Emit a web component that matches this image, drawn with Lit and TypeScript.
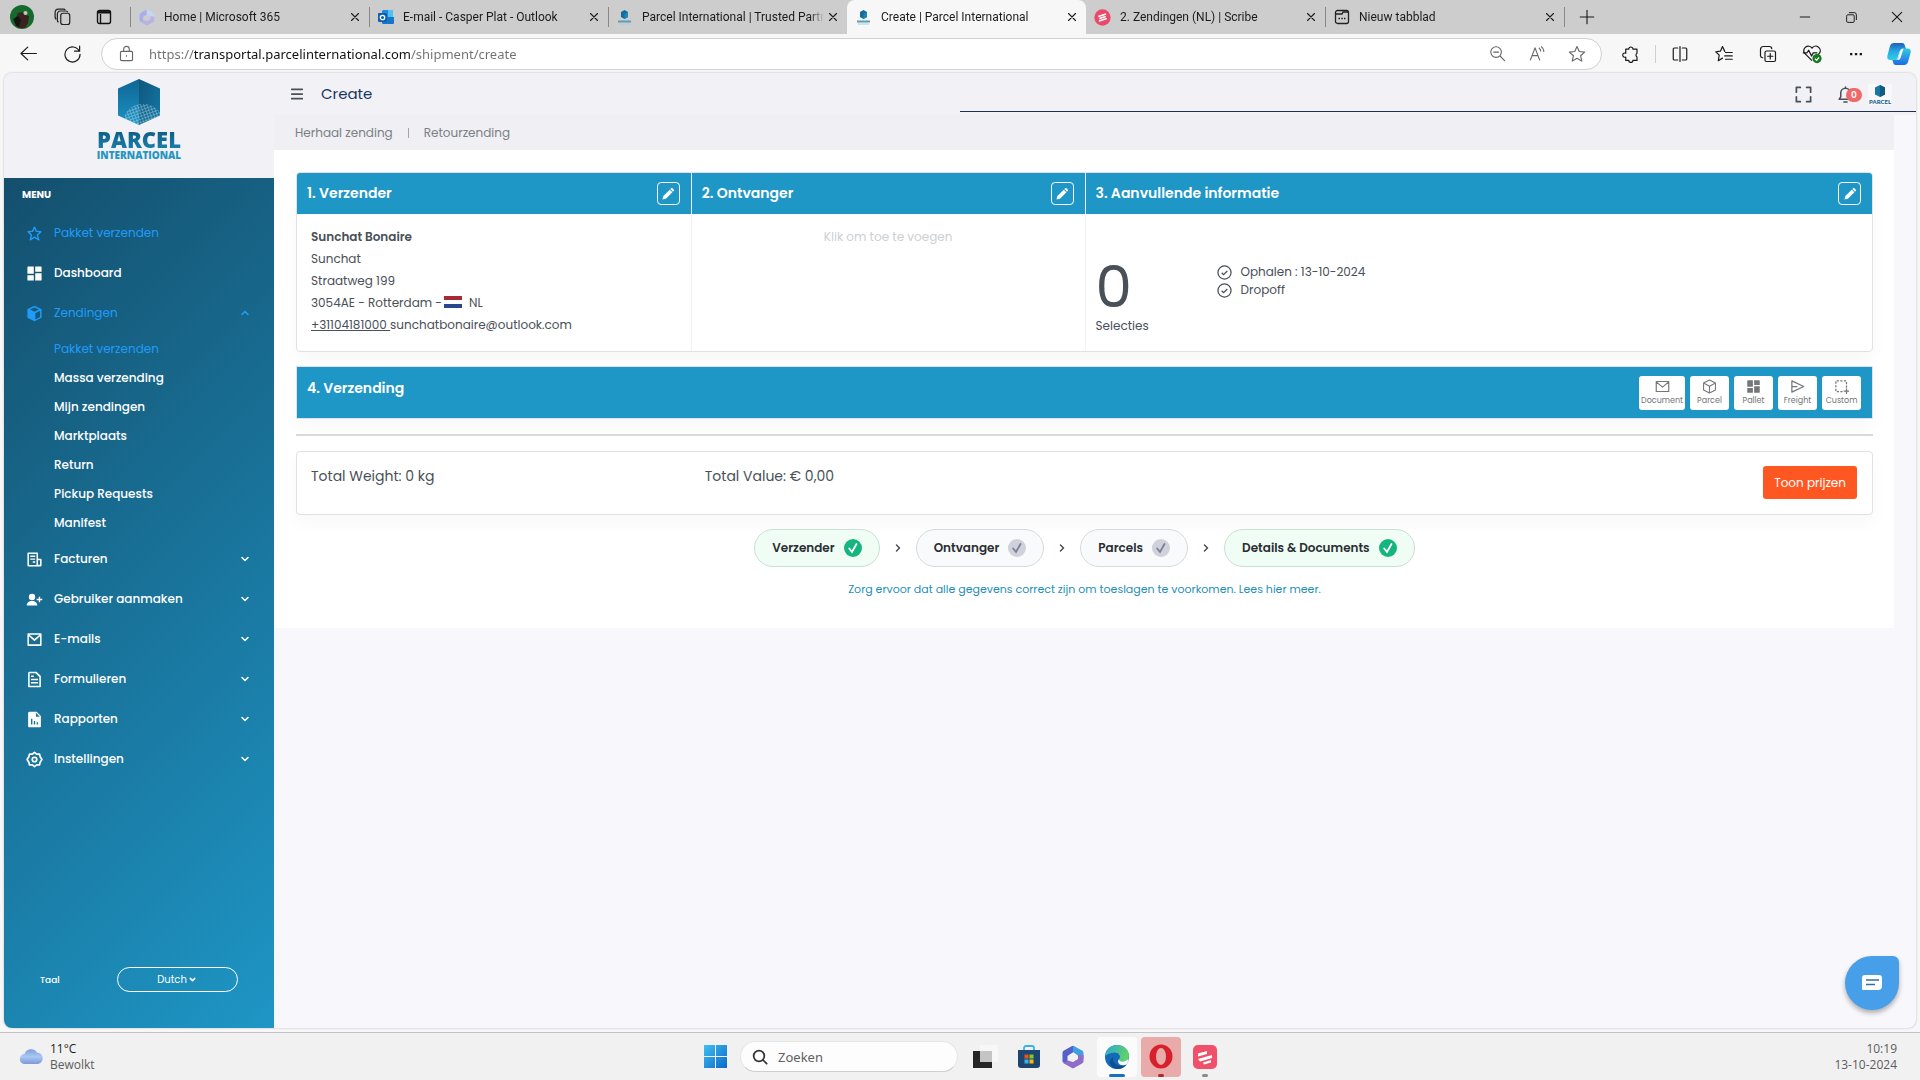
import { LitElement, html, css, svg, nothing } from "lit";
import { customElement } from "lit/decorators.js";

const line = (d: string, size = 20, width = 1.6) => html`<svg class="ico" width=${size} height=${size} viewBox="0 0 24 24" fill="none" stroke="currentColor" stroke-width=${width} stroke-linecap="round" stroke-linejoin="round" aria-hidden="true"><path d=${d}></path></svg>`;
const solid = (d: string, size = 18) => html`<svg class="ico" width=${size} height=${size} viewBox="0 0 24 24" fill="currentColor" fill-rule="evenodd" aria-hidden="true"><path d=${d}></path></svg>`;

const D = {
  star: "m6.516 14.323-1.49 6.452a.998.998 0 0 0 1.529 1.057L12 18.202l5.445 3.63a1.001 1.001 0 0 0 1.517-1.106l-1.829-6.4 4.536-4.082a1 1 0 0 0-.59-1.74l-5.701-.454-2.467-5.461a.998.998 0 0 0-1.822 0L8.622 8.05l-5.701.453a1 1 0 0 0-.619 1.713l4.214 4.107zm2.853-4.326a.998.998 0 0 0 .832-.586L12 5.43l1.799 3.981a.998.998 0 0 0 .832.586l3.972.315-3.271 2.944c-.284.256-.397.65-.293 1.018l1.253 4.385-3.736-2.491a.995.995 0 0 0-1.109 0l-3.904 2.603 1.05-4.546a1 1 0 0 0-.276-.94l-3.038-2.962 4.09-.326z",
  dashboard: "M2 12.5V3a1 1 0 0 1 1-1h8v10.500zM13 2h8a1 1 0 0 1 1 1v6.500h-9zM2 14.500h9V22H3a1 1 0 0 1-1-1zM13 11.500h9V21a1 1 0 0 1-1 1h-8z",
  cube: "M12 1 22 6v12l-10 5L2 18V6zM12 3.400 5.800 6.500 12 9.600l6.200-3.100zM13.200 11.500v8.800l6.700-3.400V8.200z",
  invoice: "M3 2h13a1 1 0 0 1 1 1v8h4a1 1 0 0 1 1 1v8a2 2 0 0 1-2 2H4a2 2 0 0 1-2-2V3a1 1 0 0 1 1-1zM4.200 4.200v15.600h10.600V4.200zM17 13v6.500h2.800V13zM6 6.500h7v2H6zM6 10.500h7v2H6zM9.500 14.500H13v2H9.500z",
  userPlus: "M8.500 4a4.500 4.500 0 1 1 0 9 4.500 4.500 0 0 1 0-9zM1 20.500c0-4 3-6.500 7.500-6.500s7.500 2.500 7.500 6.500zM18 8h2v3h3v2h-3v3h-2v-3h-3v-2h3z",
  mail: "M3 3h18a1 1 0 0 1 1 1v16a1 1 0 0 1-1 1H3a1 1 0 0 1-1-1V4a1 1 0 0 1 1-1zM4.200 7.500v11.300h15.600V7.500L12 14.300zM5 5.200l7 6 7-6z",
  file: "M5 1h10l6 6v15a1 1 0 0 1-1 1H4a1 1 0 0 1-1-1V3a2 2 0 0 1 2-2zM5.200 3.200v17.600h13.600V8.500L13.500 3.200zM7 6.500h4v2H7zM7 11h10v2H7zM7 15.500h10v2H7z",
  report: "M5 1h10l6 6v15a1 1 0 0 1-1 1H4a1 1 0 0 1-1-1V3a2 2 0 0 1 2-2zM7 11v8h2v-8zM11 14v5h2v-5zM15 16v3h2v-3zM14 2.500V8h5.500z",
  cog: "M12 2 15 4.500 19 4.300 20 8.200 22.500 12 20 15.800 19 19.700 15 19.500 12 22 9 19.500 5 19.700 4 15.800 1.500 12 4 8.200 5 4.300 9 4.500ZM12 8.800a3.200 3.200 0 1 0 0 6.400 3.200 3.200 0 0 0 0-6.400Z",
  down: "m6 9 6 6 6-6",
  up: "m6 15 6-6 6 6",
  right: "m9 6 6 6-6 6",
  close: "M5 5l14 14M19 5 5 19",
  plus: "M12 3v18M3 12h18",
  pencil: "M2.500 21.500l1.500-6L15 4.500l4.500 4.500L8.500 20zM16 3.500l1.200-1.200a1.800 1.800 0 0 1 2.600 0l1.900 1.900a1.800 1.800 0 0 1 0 2.600L20.500 8z",
};

const smallLogo = html`<svg class="ico" width="15" height="16" viewBox="0 0 15 16" aria-hidden="true"><path d="M7.500 1 11 3v5l-3.500 2L4 8V3z" fill="#126c9c"></path><path d="M7.500 5 11 3v5l-3.500 2z" fill="#1b86b8"></path><path d="M1 11.500h13v2H1z" fill="#5d9cb8"></path><path d="M2 14.500h11v1H2z" fill="#a5d0e2"></path></svg>`;

const favicons: Record<string, unknown> = {
  m365: html`<svg class="ico" width="16" height="17" viewBox="0 0 22 24" aria-hidden="true"><path d="M10 1 2 5.500C1 6 .5 7 .5 8v9l5 2.500V11l6-4V1z" fill="#a9aee8"></path><path d="M12 1l8 4.500c1 .5 1.500 1.500 1.500 2.500v6l-5-3-6-4V1z" fill="#c3d6f3"></path><path d="M21.500 11v5c0 1-.5 2-1.500 2.500L12 23c-1 .4-1.500.3-2 0L1 18l5-2.500 5 1.500 5-3v-4z" fill="#b6b4e4"></path></svg>`,
  outlook: html`<svg class="ico" width="16" height="16" viewBox="0 0 16 16" aria-hidden="true"><path d="M5 1h9a1 1 0 0 1 1 1v6H4V2z" fill="#1a8be0"></path><path d="M10 1h5v7h-5z" fill="#4cc2f5"></path><path d="M4 8h12v6a1 1 0 0 1-1 1H5a1 1 0 0 1-1-1z" fill="#1577c9"></path><rect x="0" y="4" width="9" height="9" rx="1" fill="#0f5fb0"></rect><circle cx="4.500" cy="8.500" r="2.200" fill="none" stroke="#fff" stroke-width="1.300"></circle></svg>`,
  parcel: smallLogo,
  scribe: html`<svg class="ico" width="17" height="17" viewBox="0 0 24 24" aria-hidden="true"><circle cx="12" cy="12" r="11.500" fill="#ea4a68"></circle><path d="M6 10.500l11-3.500M7.500 13.500l9-3M7 17l11-3.500" stroke="#fff" stroke-width="2.200"></path></svg>`,
  blank: html`<svg class="ico" width="16" height="16" viewBox="0 0 16 16" fill="none" stroke="#222" stroke-width="1.300" aria-hidden="true"><rect x="1.500" y="1.500" width="13" height="13" rx="2"></rect><path d="M2 5h6l1-2h5M4.500 9.500h1.500M7.300 9.500h1.500M10 9.500h1.500"></path></svg>`,
};

const TABS = [
  { icon: "m365", title: "Home | Microsoft 365" },
  { icon: "outlook", title: "E-mail - Casper Plat - Outlook" },
  { icon: "parcel", title: "Parcel International | Trusted Partner" },
  { icon: "parcel", title: "Create | Parcel International", active: true },
  { icon: "scribe", title: "2. Zendingen (NL) | Scribe" },
  { icon: "blank", title: "Nieuw tabblad" },
];

@customElement("browser-chrome")
export class BrowserChrome extends LitElement {
  static styles = css`
    :host { display: block; font-family: Roboto, "Noto Sans", sans-serif; color: #1b1b1b; background: #f7f7f7; }
    button { border: 0; background: none; padding: 0; color: inherit; font: inherit; display: grid; place-items: center; }
    .ico { display: block; flex: none; }
    .strip { display: flex; align-items: stretch; height: 34px; background: #cdcdcd; }
    .lead { display: flex; align-items: center; padding-left: 1px; width: 130px; box-sizing: border-box; }
    .lead button { width: 41px; height: 34px; }
    .tabs { display: flex; flex: 0 1 1434px; min-width: 0; }
    .tab { flex: 1 1 0; min-width: 0; display: flex; align-items: center; padding: 0 5px 0 8px; position: relative; }
    .tab::before { content: ""; width: 1px; height: 20px; background: #8b8782; margin-left: -8px; margin-right: 7px; }
    .tab.active { background: #f7f7f7; border-radius: 8px 8px 0 0; }
    .tab.active::before, .tab.active + .tab::before { background: transparent; }
    .split { width: 1px; height: 20px; align-self: center; background: #8b8782; }
    .fav { width: 17px; display: grid; place-items: center; }
    .title { flex: 1; min-width: 0; margin-left: 9px; font-size: 12px; line-height: 18px; white-space: nowrap; overflow: hidden; mask-image: linear-gradient(to right, #000 calc(100% - 14px), transparent); }
    .close { width: 18px; height: 18px; }
    .new { width: 43px; }
    .win { margin-left: auto; display: flex; }
    .win button { width: 46px; }
    .bar { display: flex; align-items: center; height: 39px; }
    .nav { width: 44px; height: 36px; flex: none; }
    .nav:last-child { width: 42px; }
    .back { margin-left: 6px; }
    .address { flex: 1; min-width: 0; display: flex; align-items: center; height: 30px; margin: 0 7px; padding: 0 4px 0 16px; border: 1px solid #cfd0d2; border-radius: 16px; background: #fff; color: #666; }
    .url { flex: 1; min-width: 0; border: 0; outline: 0; padding: 0; margin-left: 14px; font: 13px/20px "Noto Sans", "Open Sans", sans-serif; color: transparent; background: linear-gradient(to right, #707070 45px, #111 45px, #111 261px, #707070 261px); -webkit-background-clip: text; background-clip: text; }
    .address button { width: 40px; height: 28px; }
    .rule { width: 1px; height: 18px; background: #cfcfcf; margin: 0 2px; }
  `;

  render() {
    return html`
      <div class="strip">
        <div class="lead">
          <button aria-label="Profiel"><svg class="ico" width="24" height="24" viewBox="0 0 24 24"><circle cx="12" cy="12" r="12" fill="#156a2d"></circle><path d="M8 8l4-1 3 3 4 1-1 7-3 5-6 0-4-5 1-5z" fill="#3a2220"></path><path d="M3 14l5-3 3 4-2 7-3-1z" fill="#141512"></path><circle cx="15.500" cy="8" r="2" fill="#cfc4b4"></circle></svg></button>
          <button aria-label="Werkruimten"><svg class="ico" width="18" height="18" viewBox="0 0 24 24" fill="none" stroke="#222" stroke-width="1.600"><rect x="9" y="7" width="12" height="15" rx="3"></rect><path d="M6 19a3 3 0 0 1-1.500-2.500V8a4 4 0 0 1 4-4H16a3 3 0 0 1 2.500 1.500M3 15a3 3 0 0 1-1.500-2.500V5.500A4 4 0 0 1 5.500 1.500H13A3 3 0 0 1 15 2.500"></path></svg></button>
          <button aria-label="Tabbladacties"><svg class="ico" width="16" height="16" viewBox="0 0 16 16" fill="none" stroke="#111" stroke-width="1.400"><rect x="1.500" y="1.500" width="13" height="13" rx="2"></rect><path d="M1.500 3.300h13" stroke-width="2.400"></path><path d="M4.500 5v9.500"></path></svg></button>
        </div>
        <div class="tabs">
          ${TABS.map((t) => html`<div class="tab ${t.active ? "active" : ""}">
            <span class="fav">${favicons[t.icon]}</span>
            <span class="title">${t.title}</span>
            <button class="close" aria-label="Tabblad sluiten">${line(D.close, 12, 2.2)}</button>
          </div>`)}
        </div>
        <span class="split"></span>
        <button class="new" aria-label="Nieuw tabblad">${line(D.plus, 18, 1.5)}</button>
        <div class="win">
          <button aria-label="Minimaliseren">${line("M4 12h16", 14, 2)}</button>
          <button aria-label="Verkleinen">${line("M3 9a2 2 0 0 1 2-2h10a2 2 0 0 1 2 2v10a2 2 0 0 1-2 2H5a2 2 0 0 1-2-2zM8 3h9a4 4 0 0 1 4 4v9", 13, 1.8)}</button>
          <button aria-label="Sluiten">${line("M4 4l16 16M20 4 4 20", 14, 1.9)}</button>
        </div>
      </div>
      <div class="bar">
        <button class="nav back" aria-label="Terug">${line("M22 12H3M11 4l-8.500 8L11 20", 19, 1.5)}</button>
        <button class="nav" aria-label="Vernieuwen">${line("M20.500 9A9.500 9.500 0 1 0 21.500 13M21 2.500V9h-6.500", 19, 1.5)}</button>
        <div class="address">
          ${line("M5 9h14a1.500 1.500 0 0 1 1.500 1.500v10A1.500 1.500 0 0 1 19 22H5a1.500 1.500 0 0 1-1.500-1.500v-10A1.500 1.500 0 0 1 5 9zM8 9V6a4 4 0 0 1 8 0v3M12 15v.8", 17, 1.6)}
          <input class="url" type="text" aria-label="Adres" value="https://transportal.parcelinternational.com/shipment/create">
          <button aria-label="Uitzoomen">${line("M10 2.500a7.500 7.500 0 1 1 0 15 7.500 7.500 0 0 1 0-15zM15.500 15.500l6.500 6.500M6.500 10h7", 17, 1.6)}</button>
          <button aria-label="Hardop voorlezen">${line("M2 21 8.500 4 15 21M4.500 15h8M14.500 4.500a5 5 0 0 1 2 4M17.500 2.500a8 8 0 0 1 3.500 6.500", 17, 1.6)}</button>
          <button aria-label="Favoriet">${line("M12 2l3 6.700 7.200.8-5.400 4.800 1.500 7.200L12 17.800l-6.300 3.700 1.500-7.200L1.800 9.500 9 8.700z", 18, 1.5)}</button>
        </div>
        <button class="nav" aria-label="Extensies">${line("M5 5.500h4a2.800 2.800 0 1 1 5.600 0H20v5.500a3 3 0 0 0 0 5v4.500h-5.400a2.800 2.800 0 0 1-5.600 0H5V16a2.800 2.800 0 1 1 0-5z", 18, 1.6)}</button>
        <span class="rule"></span>
        <button class="nav" aria-label="Scherm splitsen">${line("M9 4H4.500A1.500 1.500 0 0 0 3 5.500v13A1.500 1.500 0 0 0 4.500 20H9M15 4h4.500A1.500 1.500 0 0 1 21 5.500v13a1.500 1.500 0 0 1-1.500 1.500H15M12 2v20", 18, 1.6)}</button>
        <button class="nav" aria-label="Favorieten">${line("M13 8.500 10 2 7.200 8.200 1 9l4.600 4.600L4.400 21 10 17.500M14 10h9M13 14.500h10M14 19h9", 18, 1.6)}</button>
        <button class="nav" aria-label="Verzamelingen">${line("M10 8h10a2 2 0 0 1 2 2v10a2 2 0 0 1-2 2H10a2 2 0 0 1-2-2V10a2 2 0 0 1 2-2zM15 11.500v7M11.500 15h7M5 17a3 3 0 0 1-3-2.500V6a4 4 0 0 1 4-4h8a3 3 0 0 1 3 3", 18, 1.6)}</button>
        <button class="nav" aria-label="Browseressentials"><svg class="ico" width="20" height="20" viewBox="0 0 24 24" fill="none" stroke="#1b1b1b" stroke-width="1.500" stroke-linejoin="round"><path d="M12 20 3 11a5.200 5.200 0 0 1 9-6 5.200 5.200 0 0 1 9 6l-3 3"></path><path d="M1 10.500h5l2-3 3.500 7 2-4h5"></path><circle cx="18" cy="17.500" r="5.500" fill="#167a1f" stroke="none"></circle><path d="M15.500 17.500l2 2 3-3.500" stroke="#fff"></path></svg></button>
        <button class="nav" aria-label="Meer">${solid("M3 10.500h3.500V14H3zM10.300 10.500h3.500V14h-3.500zM17.500 10.500H21V14h-3.500z", 16)}</button>
        <button class="nav" aria-label="Copilot"><svg class="ico" width="24" height="24" viewBox="0 0 24 24"><defs><linearGradient id="cpa" x1="0" y1="0" x2="0" y2="1"><stop offset="0" stop-color="#1b62b8"></stop><stop offset="0.500" stop-color="#29a9e8"></stop><stop offset="1" stop-color="#2fd0e0"></stop></linearGradient><linearGradient id="cpb" x1="0" y1="0" x2="0" y2="1"><stop offset="0" stop-color="#35cbe0"></stop><stop offset="1" stop-color="#1b6be8"></stop></linearGradient></defs><path d="M7 1h8c2 0 2.500 1 3 3l1 3h-3c-2 0-3 1-3.500 3l-2 6c-.5 1.500-1.500 2-3 2H3c-3 0-3-3-2.400-5L3 4C3.700 2 5 1 7 1z" fill="url(#cpa)"></path><path d="M17 23H9c-2 0-2.500-1-3-3l-.7-2H8c2 0 3-1 3.500-3l2-6.500C14 7 15 6.500 16.500 6.500H21c3 0 3 3 2.400 5L21 20c-.7 2-2 3-4 3z" fill="url(#cpb)"></path><path d="M13.500 8.500c.5-1.300 1.500-2 3-2L13.500 16c-.6 1.500-1.500 2-3.500 2 1-.7 1.300-1.500 1.600-3z" fill="#fff"></path></svg></button>
      </div>
    `;
  }
}

const SUB = ["Pakket verzenden", "Massa verzending", "Mijn zendingen", "Marktplaats", "Return", "Pickup Requests", "Manifest"];
const NAV: { label: string; icon: string; on?: boolean; open?: boolean; leaf?: boolean }[] = [
  { label: "Pakket verzenden", icon: "star", on: true, leaf: true },
  { label: "Dashboard", icon: "dashboard", leaf: true },
  { label: "Zendingen", icon: "cube", on: true, open: true },
  { label: "Facturen", icon: "invoice" },
  { label: "Gebruiker aanmaken", icon: "userPlus" },
  { label: "E-mails", icon: "mail" },
  { label: "Formulieren", icon: "file" },
  { label: "Rapporten", icon: "report" },
  { label: "Instellingen", icon: "cog" },
];

@customElement("portal-sidebar")
export class PortalSidebar extends LitElement {
  static styles = css`
    :host { display: flex; flex-direction: column; color: #fff; font: 500 12px/20px Poppins, Inter, sans-serif; }
    .brand { height: 105px; box-sizing: border-box; background: #f1f1f6; display: flex; flex-direction: column; align-items: center; padding-top: 5px; }
    .brand svg { display: block; }
    .name { font: 800 22px/21px "Open Sans", sans-serif; margin-top: 3px; background: linear-gradient(#0d5a80, #1a81ae); -webkit-background-clip: text; background-clip: text; color: transparent; }
    .sub { font: 800 10px/10px "Open Sans", sans-serif; color: #2795bf; }
    .panel { flex: 1; display: flex; flex-direction: column; background: linear-gradient(135deg, #144f6d, #1e96c6); }
    .menu { margin: 0; font-size: 10px; line-height: 33px; font-weight: 700; padding: 0 18px 2px; }
    ul { list-style: none; margin: 0; padding: 0; }
    .item { display: flex; align-items: center; width: 100%; height: 40px; box-sizing: border-box; padding: 0 23px 0 22px; border: 0; background: none; color: inherit; font: inherit; text-decoration: none; text-align: left; }
    .item .text { flex: 1; margin-left: 11px; }
    .item.on, .children a.on { color: #219bf8; font-weight: 400; }
    .ico { display: block; flex: none; }
    .children { padding: 1px 0 2px 50px; }
    .children a { display: block; line-height: 29px; color: #fff; text-decoration: none; }
    .lang { margin-top: auto; display: flex; align-items: center; justify-content: space-between; padding: 0 36px 36px; }
    .lang label { font-size: 9px; }
    .pick { position: relative; width: 121px; }
    .pick select { appearance: none; width: 100%; height: 25px; border: 1px solid #fff; border-radius: 13px; background: transparent; color: #fff; font: 400 10px/14px Poppins, Inter, sans-serif; text-align-last: center; padding: 0 17px 0 6px; }
    .pick svg { position: absolute; left: 71px; top: 8px; pointer-events: none; }
  `;

  render() {
    return html`
      <div class="brand">
        <svg width="44" height="48" viewBox="0 0 44 50" preserveAspectRatio="none" aria-hidden="true">
          <defs>
            <linearGradient id="l" x1="0" y1="0" x2="0" y2="1"><stop offset="0" stop-color="#0f6694"></stop><stop offset="1" stop-color="#1c93c4"></stop></linearGradient>
            <linearGradient id="r" x1="0" y1="0" x2="1" y2="1"><stop offset="0" stop-color="#10567c"></stop><stop offset="1" stop-color="#1479a8"></stop></linearGradient>
            <pattern id="g" width="3" height="3" patternUnits="userSpaceOnUse" patternTransform="rotate(-20)"><path d="M0 0h3M0 0v3" stroke="#d4edf7" stroke-width="1"></path></pattern>
            <clipPath id="c"><path d="M22 1 43 11v28L22 49 1 39V11z"></path></clipPath>
          </defs>
          <path d="M22 1 1 11v28l21 10z" fill="url(#l)"></path>
          <path d="M22 1 43 11v28L22 49z" fill="url(#r)"></path>
          <g clip-path="url(#c)"><ellipse cx="26" cy="44" rx="19" ry="17" fill="url(#g)" opacity="0.700"></ellipse></g>
        </svg>
        <span class="name">PARCEL</span>
        <span class="sub">INTERNATIONAL</span>
      </div>
      <div class="panel">
        <p class="menu">MENU</p>
        <ul>
          ${NAV.map((n) => html`<li>
            ${n.leaf
              ? html`<a class="item ${n.on ? "on" : ""}" href="#">${solid((D as any)[n.icon], 17)}<span class="text">${n.label}</span></a>`
              : html`<button class="item ${n.on ? "on" : ""}" aria-expanded=${n.open ? "true" : "false"}>
                  ${n.icon === "cog" ? line(D.cog, 17, 2.4) : solid((D as any)[n.icon], 17)}
                  <span class="text">${n.label}</span>${line(n.open ? D.up : D.down, 12, 3)}
                </button>`}
            ${n.open ? html`<ul class="children">${SUB.map((s, i) => html`<li><a href="#" class=${i === 0 ? "on" : ""}>${s}</a></li>`)}</ul>` : nothing}
          </li>`)}
        </ul>
        <div class="lang">
          <label for="lang">Taal</label>
          <span class="pick"><select id="lang"><option>Dutch</option></select>${line(D.down, 9, 4)}</span>
        </div>
      </div>
    `;
  }
}

const STEPS = [
  { label: "Verzender", done: true },
  { label: "Ontvanger", done: false },
  { label: "Parcels", done: false },
  { label: "Details & Documents", done: true },
];

const KINDS = [
  { label: "Document", icon: line("M2 4h20v16H2zM2.500 5l9.500 8 9.500-8", 15, 1.9) },
  { label: "Parcel", icon: line("M12 1.500 21.500 6.500v11L12 22.500 2.500 17.500v-11zM2.500 6.500 12 11.500l9.500-5M12 11.500v11", 15, 1.7) },
  { label: "Pallet", icon: solid(D.dashboard, 15) },
  { label: "Freight", icon: line("M3 3l19 9L3 21zM3 12h8", 15, 2) },
  { label: "Custom", icon: html`<svg class="ico" width="15" height="15" viewBox="0 0 24 24" fill="none" stroke="currentColor" stroke-width="2"><path d="M20 14V3H3v17h11" stroke-dasharray="3.500 2.300"></path><path d="M20 15v9M15.500 19.500h9"></path></svg>` },
];

@customElement("shipment-form")
export class ShipmentForm extends LitElement {
  static styles = css`
    :host { display: block; font: 400 12px/22px Poppins, Inter, sans-serif; color: #495057; background: #fff; padding: 22px 21px 28px 22px; }
    button { font: inherit; padding: 0; }
    .ico { display: block; flex: none; }
    .card { border: 1px solid #dfe1e6; border-radius: 4px; background: #fff; box-shadow: 0 8px 18px rgba(18, 38, 63, 0.03); overflow: hidden; }
    .info { display: grid; grid-template-columns: 1fr 1fr 2fr; }
    .col + .col { border-left: 1px solid #f0f1f3; }
    .head { display: flex; align-items: center; justify-content: space-between; height: 41px; padding: 0 11px 0 10px; background: #1e96c6; color: #fff; }
    h2 { margin: 0; font-size: 14px; line-height: 21px; font-weight: 600; }
    .edit { width: 23px; height: 23px; border: 1px solid #fff; border-radius: 4px; background: none; color: #fff; display: grid; place-items: center; }
    .body { min-height: 137px; box-sizing: border-box; padding: 12px 14px; }
    .body strong { display: block; font-weight: 600; }
    .row { display: flex; align-items: center; }
    .flag { width: 18px; height: 12px; margin: 0 7px 3px 2px; }
    .tel { color: inherit; }
    .mail { color: inherit; text-decoration: none; }
    .hint { display: block; width: 100%; border: 0; background: none; color: #cdd0d3; }
    .extra { display: grid; grid-template-columns: 121px 1fr; padding: 45px 10px 8px; }
    .count { font-size: 58px; line-height: 56px; }
    .opts { list-style: none; margin: 0; padding: 4px 0 0; }
    .opts li { display: flex; align-items: center; gap: 9px; line-height: 18px; }
    .ship { margin-top: 14px; border-radius: 0; }
    .ship .head { height: 51px; }
    .ship h2 { margin-bottom: 8px; }
    .kinds { display: flex; gap: 5px; }
    .kind { min-width: 39px; height: 34px; padding: 0 2px; border: 0; border-radius: 3px; background: #fff; color: #74767a; font-size: 8px; line-height: 10px; display: flex; flex-direction: column; align-items: center; justify-content: center; gap: 2px; }
    hr { border: 0; height: 2px; background: #d9dadc; margin: 15px 0; }
    .total { display: grid; grid-template-columns: 1fr 2fr 1fr; padding: 14px 0; font-size: 14px; min-height: 64px; box-sizing: border-box; }
    .total > span { line-height: 20px; padding-left: 14px; }
    .price { justify-self: end; align-self: start; margin-right: 15px; padding: 0 11px; height: 33px; border: 0; border-radius: 3px; background: #ff5722; color: #fff; font-size: 12px; }
    .steps { display: flex; justify-content: center; align-items: center; margin: 14px 0 0; padding: 0; list-style: none; gap: 12px; }
    .steps li { display: flex; align-items: center; gap: 12px; }
    .step { display: flex; align-items: center; gap: 9px; height: 38px; box-sizing: border-box; padding: 0 17px; border: 1px solid #d5d9e3; border-radius: 19px; background: #f9fafb; color: #2a2e33; font-size: 12px; font-weight: 600; }
    .done { background: #effdf5; border-color: #c9e0d6; }
    .note { display: block; text-align: center; margin-top: 11px; font-size: 11px; color: #1e8fb5; text-decoration: none; }
  `;

  private head(title: string) {
    return html`<div class="head"><h2>${title}</h2><button class="edit" aria-label="Bewerken">${solid(D.pencil, 14)}</button></div>`;
  }

  private check() {
    return html`<svg class="ico" width="15" height="15" viewBox="0 0 24 24" fill="none" stroke="currentColor" stroke-width="2" aria-hidden="true"><circle cx="12" cy="12" r="10.500"></circle><path d="M7.500 12.500l3 3 6-6"></path></svg>`;
  }

  render() {
    return html`
      <section class="card info">
        <div class="col">
          ${this.head("1. Verzender")}
          <div class="body">
            <strong>Sunchat Bonaire</strong>
            <div>Sunchat</div>
            <div>Straatweg 199</div>
            <div class="row">3054AE - Rotterdam - <svg class="flag" viewBox="0 0 18 12" role="img" aria-label="Nederland"><path d="M0 0h18v4H0z" fill="#a52a35"></path><path d="M0 4h18v4H0z" fill="#fff"></path><path d="M0 8h18v4H0z" fill="#28478c"></path></svg> NL</div>
            <div><a class="tel" href="tel:+31104181000">+31104181000 </a><a class="mail" href="mailto:sunchatbonaire@outlook.com">sunchatbonaire@outlook.com</a></div>
          </div>
        </div>
        <div class="col">
          ${this.head("2. Ontvanger")}
          <div class="body"><button class="hint">Klik om toe te voegen</button></div>
        </div>
        <div class="col">
          ${this.head("3. Aanvullende informatie")}
          <div class="body extra">
            <div><div class="count">0</div><div>Selecties</div></div>
            <ul class="opts">
              <li>${this.check()}Ophalen : 13-10-2024</li>
              <li>${this.check()}Dropoff</li>
            </ul>
          </div>
        </div>
      </section>
      <section class="card ship">
        <div class="head">
          <h2>4. Verzending</h2>
          <div class="kinds">${KINDS.map((k) => html`<button class="kind">${k.icon}<span>${k.label}</span></button>`)}</div>
        </div>
      </section>
      <hr>
      <section class="card total">
        <span>Total Weight: 0 kg</span>
        <span>Total Value: € 0,00</span>
        <button class="price">Toon prijzen</button>
      </section>
      <ol class="steps">
        ${STEPS.map((s, i) => html`<li>
          ${i ? line(D.right, 12, 3) : nothing}
          <span class="step ${s.done ? "done" : ""}">${s.label}
            <svg class="ico" width="18" height="18" viewBox="0 0 18 18" aria-hidden="true"><circle cx="9" cy="9" r="9" fill=${s.done ? "#16b57f" : "#cfd2dc"}></circle><path d="M5.200 9.500 8 13l4.500-8" fill="none" stroke=${s.done ? "#fff" : "#7b8190"} stroke-width="1.800" stroke-linecap="round"></path></svg>
          </span>
        </li>`)}
      </ol>
      <a class="note" href="#">Zorg ervoor dat alle gegevens correct zijn om toeslagen te voorkomen. Lees hier meer.</a>
    `;
  }
}

@customElement("desktop-taskbar")
export class DesktopTaskbar extends LitElement {
  static styles = css`
    :host { display: grid; grid-template-columns: 1fr auto 1fr; align-items: center; height: 48px; box-sizing: border-box; border-top: 1px solid #c4c4c8; background: #f1f1f1; font: 12px/16px "Open Sans", "Noto Sans", sans-serif; color: #5c5c5c; }
    .ico { display: block; flex: none; }
    .weather { display: flex; align-items: center; gap: 6px; padding-left: 19px; }
    .temp { color: #1d1d1d; }
    .mid { display: flex; align-items: center; }
    .app { width: 40px; height: 40px; margin: 0 2px; padding: 0; border: 0; border-radius: 4px; background: none; display: grid; place-items: center; position: relative; }
    .app.front { background: #fbfbfb; }
    .app.alert { background: #e9aaaa; }
    .mark { position: absolute; bottom: 0; left: 17px; width: 6px; height: 3px; border-radius: 2px; background: #8a8a8a; }
    .front .mark { left: 12px; width: 16px; background: #1a6fc0; }
    .alert .mark { background: #b3262c; }
    .search { display: flex; align-items: center; gap: 10px; width: 218px; height: 31px; box-sizing: border-box; margin: 0 5px 0 3px; padding: 0 11px; border-radius: 16px; background: #fdfdfd; border: 1px solid #e6e6e6; border-bottom-color: #cfcfcf; color: #333; }
    .search input { flex: 1; min-width: 0; border: 0; outline: 0; background: none; padding: 0; font: 13px/18px "Noto Sans", "Open Sans", sans-serif; color: #555; }
    .search input::placeholder { color: #606060; }
    .clock { text-align: right; padding-right: 23px; }
  `;

  render() {
    return html`
      <div class="weather">
        <svg class="ico" width="25" height="17" viewBox="0 0 25 17" aria-hidden="true"><defs><linearGradient id="cl" x1="0" y1="0" x2="0" y2="1"><stop offset="0" stop-color="#7f9fdc"></stop><stop offset="0.500" stop-color="#a9c8f4"></stop><stop offset="1" stop-color="#7c9ad4"></stop></linearGradient></defs><path d="M6 16a5 5 0 0 1-.5-10A7 7 0 0 1 18 4.500 5.800 5.800 0 0 1 19 16z" fill="url(#cl)"></path></svg>
        <div><div class="temp">11°C</div><div>Bewolkt</div></div>
      </div>
      <div class="mid">
        <button class="app" aria-label="Start"><svg width="23" height="23" viewBox="0 0 23 23"><defs><linearGradient id="w" x1="0" y1="0" x2="1" y2="1"><stop offset="0" stop-color="#3fc0f0"></stop><stop offset="1" stop-color="#0b67c8"></stop></linearGradient></defs><path d="M0 0h11v11H0zM12 0h11v11H12zM0 12h11v11H0zM12 12h11v11H12z" fill="url(#w)"></path></svg></button>
        <label class="search">${line("M10.500 2.500a8 8 0 1 1 0 16 8 8 0 0 1 0-16zM16.500 16.500l5.500 5.500", 16, 2.6)}<input type="text" placeholder="Zoeken" aria-label="Zoeken"></label>
        <button class="app" aria-label="Taakweergave"><svg width="26" height="24" viewBox="0 0 26 24"><rect x="8" y="0" width="18" height="17" fill="#f7f7f7"></rect><rect x="1" y="6" width="19" height="17" fill="#262626"></rect><path d="M8 6h12v11H8z" fill="#c4c4c4"></path></svg></button>
        <button class="app" aria-label="Microsoft Store"><svg width="24" height="24" viewBox="0 0 24 24"><path d="M7 5V3a2 2 0 0 1 2-2h6a2 2 0 0 1 2 2v2" fill="none" stroke="#35b3ea" stroke-width="1.800"></path><path d="M1 5h22v15a3 3 0 0 1-3 3H4a3 3 0 0 1-3-3z" fill="#1d4570"></path><path d="M7.500 9.500h4v4h-4z" fill="#f1511b"></path><path d="M12.500 9.500h4v4h-4z" fill="#80cc28"></path><path d="M7.500 14.500h4v4h-4z" fill="#35b3ea"></path><path d="M12.500 14.500h4v4h-4z" fill="#fbbc09"></path></svg></button>
        <button class="app" aria-label="Microsoft 365"><svg width="22" height="24" viewBox="0 0 22 24"><path d="M10 1 2 5.500C1 6 .5 7 .5 8v9l5 2.500V11l6-4V1z" fill="#5560c8"></path><path d="M11 .5l9 5c1 .5 1.500 1.500 1.500 2.500v6l-5-3-5.500-4z" fill="#3f9fe0"></path><path d="M21.500 10v6c0 1-.5 2-1.500 2.500L12 23c-1 .4-1.500.3-2 0L1 18l5-2.500 5 1.500 5-3v-4z" fill="#8f6ccc"></path><path d="M11 8l4 2.300v3.900L11 16.500l-4-2.300v-3.900z" fill="#f1f1f1"></path></svg></button>
        <button class="app front" aria-label="Microsoft Edge"><svg width="26" height="26" viewBox="0 0 26 26"><defs><linearGradient id="e1" x1="0" y1="0" x2="1" y2="0.300"><stop offset="0" stop-color="#2aa5dc"></stop><stop offset="1" stop-color="#5fd26a"></stop></linearGradient></defs><circle cx="13" cy="13" r="12" fill="#1469b8"></circle><path d="M1 12C2 5 7 1 13 1c7 0 12 5 12 10.500 0 4-3 6-6.500 6-3 0-4-1.500-3-3 1.500-3-1-6-5-6-5 0-8 3-9.500 3.500z" fill="url(#e1)"></path><path d="M9 13c-1 5 3 9 9 9 2 0 4-1 5-2-2 3.500-5.500 5-9 5-6 0-9-5-8-8.500z" fill="#0d4f94"></path><path d="M15.500 14.500c-1 1.500 0 3 3 3 3 0 5-1.500 6-3 0 3-1 4.500-2 6-3 1.500-8 1-8.500-3 0-1 .5-2 1.500-3z" fill="#fbfbfb"></path></svg><span class="mark"></span></button>
        <button class="app alert" aria-label="Opera"><svg width="24" height="25" viewBox="0 0 24 25"><ellipse cx="12" cy="12.500" rx="11.500" ry="12" fill="#d8202c"></ellipse><ellipse cx="12" cy="12.500" rx="5" ry="8.500" fill="#e9aaaa"></ellipse></svg><span class="mark"></span></button>
        <button class="app" aria-label="Scribe"><svg width="24" height="24" viewBox="0 0 24 24"><rect width="24" height="24" rx="5" fill="#f0506a"></rect><path d="M5 8.500l9-2.500v3L5 11.500zM5 14l14-4v3L7 16.500zM10 17.500l8-2.500v2.500L11 19.500z" fill="#fff"></path></svg><span class="mark"></span></button>
      </div>
      <div class="clock"><div>10:19</div><div>13-10-2024</div></div>
    `;
  }
}

@customElement("app-root")
export class AppRoot extends LitElement {
  static styles = css`
    :host { display: flex; flex-direction: column; min-height: 100vh; background: #f7f7f7; font: 400 12px/20px Poppins, Inter, sans-serif; color: #495057; }
    .ico { display: block; flex: none; }
    .page { flex: 1; display: grid; grid-template-columns: 270px 1fr; margin: 0 4px 4px; border-radius: 8px; overflow: hidden; background: #f7f7fc; box-shadow: 0 0 2px rgba(0, 0, 0, 0.3); position: relative; }
    .main { min-width: 0; }
    .top { display: flex; align-items: center; height: 42px; padding: 0 24px 0 16px; background: #f1f1f6; position: relative; }
    .top::after { content: ""; position: absolute; right: 0; left: 686px; bottom: 3px; height: 1px; background: #1b2f57; }
    .top button { border: 0; background: none; padding: 0; color: #495057; display: grid; place-items: center; }
    h1 { margin: 0 auto 0 17px; font-size: 15px; font-weight: 400; color: #17365d; line-height: 20px; }
    .top .bell { position: relative; margin-left: 23px; }
    .badge { position: absolute; left: 10px; top: 3px; min-width: 16px; height: 14px; border-radius: 8px; background: #ee6a6a; color: #fff; font: 600 9px/14px Poppins, Inter, sans-serif; text-align: center; }
    .user { margin-left: 13px; width: 24px; background: #f8f8fb; display: grid; justify-items: center; }
    .user span { font: 900 6px/7px Lato, sans-serif; color: #14648c; }
    .crumbs { display: flex; align-items: center; gap: 15px; height: 35px; padding-left: 21px; margin-right: 22px; background: #efeff4; color: #7c7f84; }
    .crumbs a { color: inherit; text-decoration: none; }
    .crumbs i { width: 1px; height: 10px; background: #a3a4a8; }
    shipment-form { margin-right: 22px; }
    .chat { position: absolute; right: 17px; bottom: 18px; width: 54px; height: 54px; border: 0; padding: 0; border-radius: 50% 6px 50% 50%; background: #469fe8; box-shadow: 0 3px 5px rgba(0, 0, 0, 0.3); display: grid; place-items: center; }
  `;

  render() {
    return html`
      <browser-chrome></browser-chrome>
      <div class="page">
        <portal-sidebar></portal-sidebar>
        <div class="main">
          <header class="top">
            <button aria-label="Menu">${line("M3 4h18M3 12h18M3 20h18", 14, 3)}</button>
            <h1>Create</h1>
            <button aria-label="Volledig scherm">${line("M8 3H3v6M16 3h5v6M8 21H3v-6M16 21h5v-6", 19, 2.2)}</button>
            <button class="bell" aria-label="Meldingen">${line("M4 18h16l-2-3V10a6 6 0 0 0-12 0v5zM10 21.500h4M12 4V2.500", 19, 1.900)}<span class="badge">0</span></button>
            <span class="user"><svg class="ico" width="14" height="14" viewBox="0 0 14 14" aria-hidden="true">${svg`<path d="M7 1l5 2.500v7L7 13l-5-2.500v-7z" fill="#1677a6"></path><path d="M7 1l5 2.500v7L7 13z" fill="#115a80"></path>`}</svg><span>PARCEL</span></span>
          </header>
          <nav class="crumbs"><a href="#">Herhaal zending</a><i></i><a href="#">Retourzending</a></nav>
          <shipment-form></shipment-form>
        </div>
        <button class="chat" aria-label="Chat"><svg width="22" height="18" viewBox="0 0 22 18"><path d="M4 1h14a3 3 0 0 1 3 3v8a4 4 0 0 1-4 4H2a1 1 0 0 1-1-1V4a3 3 0 0 1 3-3z" fill="#fff"></path><path d="M5 6h13M5 10.500h9" stroke="#2f6fa8" stroke-width="1.500"></path></svg></button>
      </div>
      <desktop-taskbar></desktop-taskbar>
    `;
  }
}
